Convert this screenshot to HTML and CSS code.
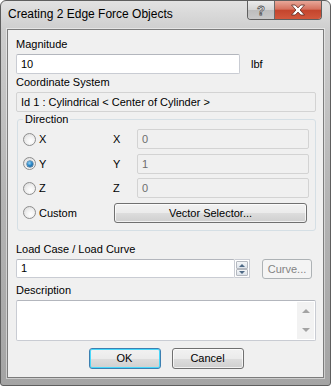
FILE: index.html
```html
<!DOCTYPE html>
<html lang="en">
<head>
    <meta charset="UTF-8">
    <title>Creating 2 Edge Force Objects</title>
    <link rel="stylesheet" href="styles.css">
</head>
<body>
<div class="window">
    <div class="titlebar">
        <span class="title">Creating 2 Edge Force Objects</span>
        <div class="caption">
            <div class="cap-btn help">?</div>
            <div class="cap-btn close">
                <svg width="16" height="12" viewBox="0 0 16 12">
                    <path d="M1.5 1 L5.2 1 L8 3.9 L10.8 1 L14.5 1 L10.1 6 L14.5 11 L10.8 11 L8 8.1 L5.2 11 L1.5 11 L5.9 6 Z"
                          fill="#fff" stroke="#5a2a22" stroke-width="0.8" stroke-linejoin="round"/>
                </svg>
            </div>
        </div>
    </div>

    <div class="client">
        <div class="label first">Magnitude</div>
        <div class="row">
            <div class="textbox magnitude">10</div>
            <span class="unit">lbf</span>
        </div>

        <div class="label tight">Coordinate System</div>
        <div class="textbox readonly coord">Id 1 : Cylindrical &lt; Center of Cylinder &gt;</div>

        <fieldset class="group">
            <legend>Direction</legend>
            <div class="dir-grid">
                <div class="radio"><span class="dot"></span>X</div>
                <div class="axis">X</div>
                <div class="textbox readonly value">0</div>

                <div class="radio"><span class="dot checked"></span>Y</div>
                <div class="axis">Y</div>
                <div class="textbox readonly value">1</div>

                <div class="radio"><span class="dot"></span>Z</div>
                <div class="axis">Z</div>
                <div class="textbox readonly value">0</div>

                <div class="radio"><span class="dot"></span>Custom</div>
                <div class="button vector">Vector Selector...</div>
            </div>
        </fieldset>

        <div class="label loadcase">Load Case / Load Curve</div>
        <div class="row">
            <div class="textbox spinbox">1</div>
            <div class="spin">
                <div class="spin-btn"><span class="arr up"></span></div>
                <div class="spin-btn"><span class="arr down"></span></div>
            </div>
            <div class="button disabled curve">Curve...</div>
        </div>

        <div class="label desc">Description</div>
        <div class="textarea">
            <div class="scrollbar">
                <span class="sarr up"></span>
                <span class="sarr down"></span>
            </div>
        </div>

        <div class="actions">
            <div class="button default">OK</div>
            <div class="button">Cancel</div>
        </div>
    </div>
</div>
</body>
</html>
```
FILE: styles.css
```css
*{
    margin: 0;
    padding: 0;
    box-sizing: border-box;
}
body{
    font-family: "Liberation Sans", Arial, sans-serif;
    font-size: 11px;
    color: #000;
    background: #fff;
}

/* window frame */
.window{
    width: 331px;
    height: 386px;
    border: 1px solid #5e5e5e;
    border-radius: 6px 6px 3px 3px;
    background: linear-gradient(to bottom, #e2e2e2 0, #cdcdcd 30px, #b4b4b4 200px, #a4a4a4 100%);
    display: flex;
    flex-direction: column;
}
.titlebar{
    height: 28px;
    display: flex;
    align-items: flex-start;
    padding: 0 8px 0 7px;
}
.title{
    font-size: 12px;
    line-height: 15px;
    margin-top: 6px;
    color: #000;
}
.caption{
    margin-left: auto;
    display: flex;
    height: 19px;
    border: 1px solid #5f5f5f;
    border-top: none;
    border-radius: 0 0 4px 4px;
    overflow: hidden;
}
.cap-btn{
    height: 100%;
    display: flex;
    align-items: center;
    justify-content: center;
}
.help{
    width: 27px;
    border-right: 1px solid #6a6a6a;
    background: linear-gradient(to bottom, #ebebeb 0, #d4d4d4 50%, #bdbdbd 51%, #c9c9c9 100%);
    color: #fff;
    font-weight: bold;
    font-size: 13px;
    -webkit-text-stroke: 0.8px #555;
}
.close{
    width: 46px;
    background: linear-gradient(to bottom, #e8a799 0, #d5725f 45%, #c4452d 52%, #d2583d 100%);
}

/* client area */
.client{
    flex: 1;
    margin: 0 6px 7px 6px;
    border: 1px solid #7c7c7c;
    box-shadow: 0 0 0 1px rgba(255,255,255,0.45);
    background: #f0f0f0;
    padding: 7px 7px 0 8px;
}
.label{
    line-height: 15px;
    height: 15px;
}
.label.tight{ margin-top: 1px; }
.label.loadcase{ margin-top: 11px; }
.label.desc{ margin-top: 4px; }

.row{
    display: flex;
    align-items: center;
    margin-top: 2px;
}
.textbox{
    height: 20px;
    line-height: 18px;
    padding-left: 4px;
    background: #fff;
    border: 1px solid #c9ccd3;
    border-top-color: #b3b6bd;
    border-radius: 2px;
}
.textbox.readonly{
    background: #f0f0f0;
    border-color: #d3d3d3;
}
.magnitude{
    width: 224px;
}
.unit{
    margin-left: 11px;
}
.coord{
    margin-top: 2px;
}

/* direction group */
.group{
    margin: 0 0 0 1px;
    border: 1px solid #d5dfe5;
    border-radius: 3px;
    padding: 0 6px 7px 5px;
    min-width: 0;
}
.group legend{
    padding: 0 2px;
    line-height: 15px;
}
.dir-grid{
    margin-top: 2px;
    display: grid;
    grid-template-columns: 90px 24px 1fr;
    grid-auto-rows: 20px;
    row-gap: 4.67px;
    align-items: center;
}
.radio{
    display: flex;
    align-items: center;
    height: 20px;
}
.dot{
    width: 13px;
    height: 13px;
    border-radius: 50%;
    border: 1px solid #8d8d8d;
    background: radial-gradient(circle at 60% 65%, #ffffff 0, #f2f2f2 40%, #d6d6d6 100%);
    margin-right: 3px;
    position: relative;
}
.dot.checked::after{
    content: "";
    position: absolute;
    left: 2.5px;
    top: 2.5px;
    width: 6px;
    height: 6px;
    border-radius: 50%;
    background: radial-gradient(circle at 40% 35%, #9fd6f5 0, #2c89c9 45%, #0d4a7e 100%);
    box-shadow: 0 0 0 0.5px #1a4e78;
}
.value{
    color: #6d6d6d;
}
.vector{
    grid-column: 2 / 4;
    margin: 0 2px 0 1px;
}

/* buttons */
.button{
    height: 20px;
    line-height: 18px;
    text-align: center;
    border: 1px solid #707070;
    border-radius: 3px;
    background: linear-gradient(to bottom, #f2f2f2 0, #ebebeb 50%, #dddddd 51%, #cfcfcf 100%);
    box-shadow: inset 0 0 0 1px rgba(255,255,255,0.7);
}
.button.disabled{
    color: #838383;
    border-color: #adb2b5;
    background: #f4f4f4;
    box-shadow: none;
}
.button.default{
    border-color: #3c7fb1;
    box-shadow: inset 0 0 0 1px #48d8fb;
}

/* load case */
.spinbox{
    width: 219px;
    height: 19px;
    line-height: 17px;
}
.spin{
    width: 15px;
    height: 19px;
    display: flex;
    flex-direction: column;
    border: 1px solid #c9ccd3;
    border-left: none;
    background: #fff;
    padding: 1px;
}
.spin-btn{
    flex: 1;
    display: flex;
    align-items: center;
    justify-content: center;
    border: 1px solid #b4b8bf;
    border-radius: 1px;
    background: linear-gradient(to bottom, #f4f6f8, #dde3ea);
}
.arr{
    width: 0;
    height: 0;
    border-left: 3px solid transparent;
    border-right: 3px solid transparent;
}
.arr.up{ border-bottom: 3px solid #4f6a86; }
.arr.down{ border-top: 3px solid #4f6a86; }
.curve{
    width: 50px;
    margin-left: 12px;
}

/* description */
.textarea{
    margin-top: 2px;
    height: 41px;
    background: #fff;
    border: 1px solid #c9ccd3;
    border-top-color: #b3b6bd;
    border-radius: 2px;
    display: flex;
    justify-content: flex-end;
    padding: 1px;
}
.scrollbar{
    width: 17px;
    background: #f2f2f2;
    display: flex;
    flex-direction: column;
    justify-content: space-between;
    align-items: center;
    padding: 7px 0 7px;
}
.sarr{
    width: 0;
    height: 0;
    border-left: 4px solid transparent;
    border-right: 4px solid transparent;
}
.sarr.up{ border-bottom: 4px solid #a3a3a3; }
.sarr.down{ border-top: 4px solid #a3a3a3; }

.actions{
    margin-top: 7px;
    display: flex;
    justify-content: center;
    gap: 11px;
}
.actions .button{
    width: 72px;
    height: 21px;
    line-height: 19px;
}
```
